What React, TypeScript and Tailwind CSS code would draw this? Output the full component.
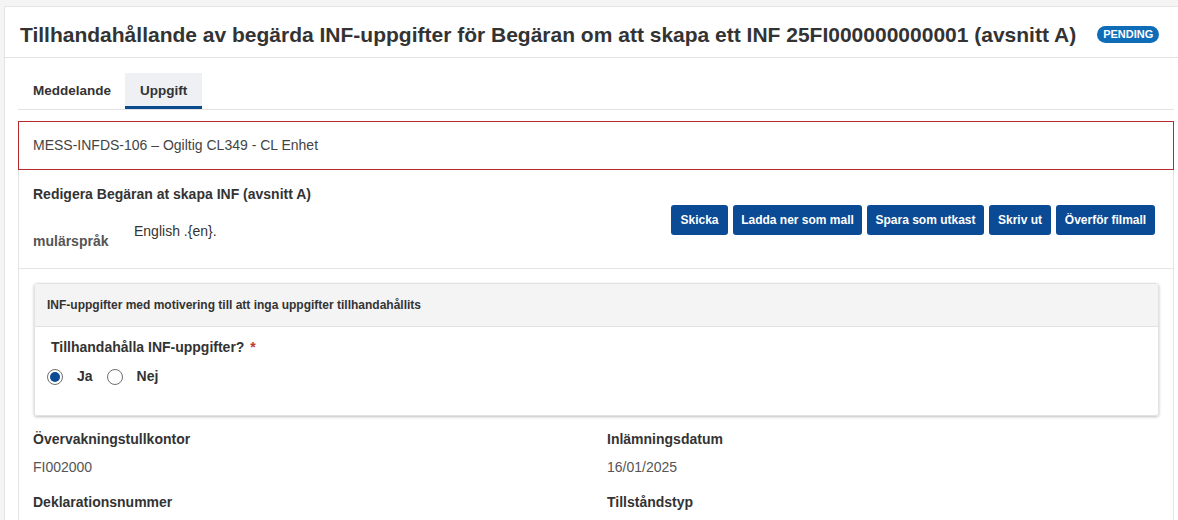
import React from "react";

const buttons = [
  { label: "Skicka", w: "w-[57px]" },
  { label: "Ladda ner som mall", w: "w-[129px]" },
  { label: "Spara som utkast", w: "w-[117px]" },
  { label: "Skriv ut", w: "w-[62px]" },
  { label: "Överför filmall", w: "w-[99px]" },
];

const fields = [
  { label: "Övervakningstullkontor", value: "FI002000" },
  { label: "Inlämningsdatum", value: "16/01/2025" },
  { label: "Deklarationsnummer", value: "" },
  { label: "Tillståndstyp", value: "" },
];

function Radio({ checked, label }: { checked?: boolean; label: string }) {
  return (
    <label className="flex items-center gap-[14px]">
      <span className="flex h-4 w-4 items-center justify-center rounded-full border-[1.5px] border-[#6f6f6f] bg-white">
        {checked && <span className="h-[10px] w-[10px] rounded-full bg-[#0b4a94]" />}
      </span>
      <span className="text-[14px] font-bold text-[#333]">{label}</span>
    </label>
  );
}

export default function App() {
  return (
    <div
      className="h-[520px] overflow-hidden bg-[#f4f4f4] pl-[4px] pt-[6px] text-[#333]"
      style={{ fontFamily: '"Liberation Sans", Arial, sans-serif' }}
    >
      <div className="w-[1190px] border-l border-t border-[#e4e4e4] bg-white">
        {/* header */}
        <div className="flex h-[51px] items-center border-b border-[#e2e2e2] pl-[15px] pt-[4px]">
          <h1 className="text-[21px] font-bold leading-none text-[#333]">
            Tillhandahållande av begärda INF-uppgifter för Begäran om att skapa ett INF 25FI000000000001 (avsnitt A)
          </h1>
          <span className="ml-[21px] rounded-full bg-[#0f6cb6] px-[6px] py-[2px] text-[11px] font-bold leading-[13px] text-white">
            PENDING
          </span>
        </div>

        <div className="ml-[13px] w-[1156px] pt-[15px]">
          {/* tabs */}
          <div className="flex border-b border-[#e2e2e2]">
            <div className="flex h-[36px] items-center pl-[15px] pr-[14px] text-[13.5px] font-bold text-[#333]">
              Meddelande
            </div>
            <div className="flex h-[36px] items-center border-b-[3px] border-[#0b4a8c] bg-[#eef0f3] px-[15px] pt-[3px] text-[13.5px] font-bold text-[#333]">
              Uppgift
            </div>
          </div>

          {/* error */}
          <div className="mt-[11px] flex h-[49px] items-center border border-[#b52a2f] pl-[14px] text-[14px] text-[#444]">
            MESS-INFDS-106 – Ogiltig CL349 - CL Enhet
          </div>

          {/* panel */}
          <div className="border-x border-[#e4e4e4]">
            <div className="border-b border-[#e4e4e4] pb-[17px] pl-[14px] pr-[18px] pt-[14px]">
              <div className="text-[14px] font-bold leading-[20px] text-[#333]">
                Redigera Begäran at skapa INF (avsnitt A)
              </div>
              <div className="mt-[1px] flex items-start justify-between">
                <div className="flex">
                  <span className="mt-[26px] w-[101px] text-[14px] font-bold leading-[20px] text-[#555]">mulärspråk</span>
                  <span className="mt-[16px] text-[14px] leading-[20px] text-[#333]">English .{"{"}en{"}"}.</span>
                </div>
                <div className="flex gap-[5px]">
                  {buttons.map((b) => (
                    <button
                      key={b.label}
                      className={`${b.w} h-[30px] rounded-[3px] bg-[#0b4a94] text-center text-[12px] font-bold text-white`}
                    >
                      {b.label}
                    </button>
                  ))}
                </div>
              </div>
            </div>

            <div className="px-[14px] pt-[14px]">
              {/* card */}
              <div className="ml-[1px] overflow-hidden rounded-[3px] border border-[#e2e2e2] shadow-[0_1px_3px_rgba(0,0,0,0.25)]">
                <div className="flex h-[43px] items-center border-b border-[#e2e2e2] bg-[#f4f4f4] pl-[12px] text-[12px] font-bold text-[#333]">
                  INF-uppgifter med motivering till att inga uppgifter tillhandahållits
                </div>
                <div className="h-[88px] pl-[12px] pt-[12px]">
                  <div className="pl-[4px] text-[14px] font-bold leading-[16px] text-[#333]">
                    Tillhandahålla INF-uppgifter? <span className="ml-[2px] text-[#c0392b]">*</span>
                  </div>
                  <div className="mt-[11px] flex gap-[14px]">
                    <Radio checked label="Ja" />
                    <Radio label="Nej" />
                  </div>
                </div>
              </div>

              {/* fields */}
              <div className="mt-[13px] grid grid-cols-2 gap-x-[36px] pr-[14px]">
                {fields.map((f) => (
                  <div key={f.label} className="h-[63px]">
                    <div className="text-[14px] font-bold leading-[20px] text-[#333]">{f.label}</div>
                    <div className="mt-[8px] text-[14px] leading-[20px] text-[#555]">{f.value}</div>
                  </div>
                ))}
              </div>
            </div>
          </div>
        </div>
      </div>
    </div>
  );
}
